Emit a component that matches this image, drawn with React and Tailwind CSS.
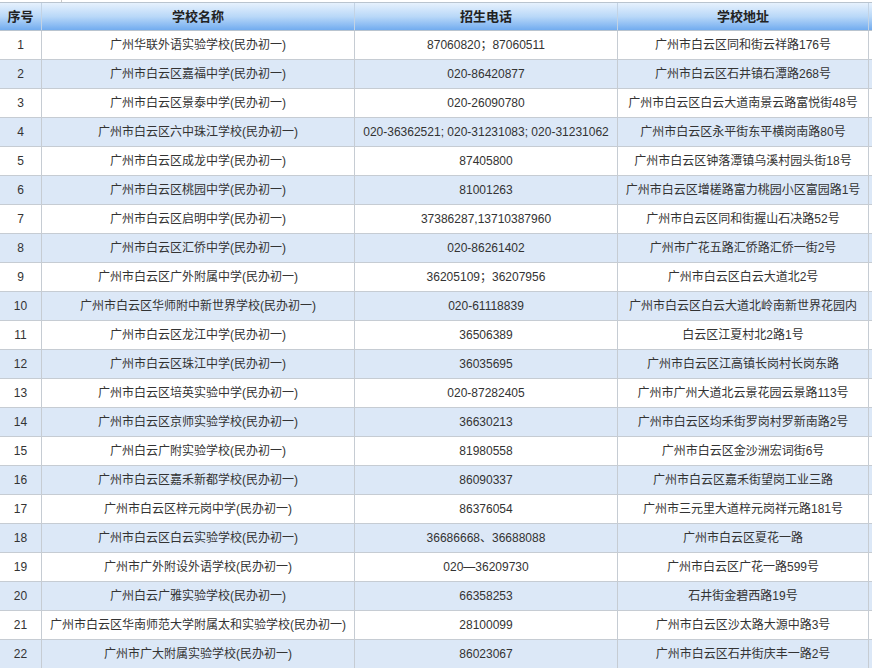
import React from "react";

const rows = [
  ["1", "广州华联外语实验学校(民办初一)", "87060820；87060511", "广州市白云区同和街云祥路176号"],
  ["2", "广州市白云区嘉福中学(民办初一)", "020-86420877", "广州市白云区石井镇石潭路268号"],
  ["3", "广州市白云区景泰中学(民办初一)", "020-26090780", "广州市白云区白云大道南景云路富悦街48号"],
  ["4", "广州市白云区六中珠江学校(民办初一)", "020-36362521; 020-31231083; 020-31231062", "广州市白云区永平街东平横岗南路80号"],
  ["5", "广州市白云区成龙中学(民办初一)", "87405800", "广州市白云区钟落潭镇乌溪村园头街18号"],
  ["6", "广州市白云区桃园中学(民办初一)", "81001263", "广州市白云区增槎路富力桃园小区富园路1号"],
  ["7", "广州市白云区启明中学(民办初一)", "37386287,13710387960", "广州市白云区同和街握山石决路52号"],
  ["8", "广州市白云区汇侨中学(民办初一)", "020-86261402", "广州市广花五路汇侨路汇侨一街2号"],
  ["9", "广州市白云区广外附属中学(民办初一)", "36205109；36207956", "广州市白云区白云大道北2号"],
  ["10", "广州市白云区华师附中新世界学校(民办初一)", "020-61118839", "广州市白云区白云大道北岭南新世界花园内"],
  ["11", "广州市白云区龙江中学(民办初一)", "36506389", "白云区江夏村北2路1号"],
  ["12", "广州市白云区珠江中学(民办初一)", "36035695", "广州市白云区江高镇长岗村长岗东路"],
  ["13", "广州市白云区培英实验中学(民办初一)", "020-87282405", "广州市广州大道北云景花园云景路113号"],
  ["14", "广州市白云区京师实验学校(民办初一)", "36630213", "广州市白云区均禾街罗岗村罗新南路2号"],
  ["15", "广州白云广附实验学校(民办初一)", "81980558", "广州市白云区金沙洲宏词街6号"],
  ["16", "广州市白云区嘉禾新都学校(民办初一)", "86090337", "广州市白云区嘉禾街望岗工业三路"],
  ["17", "广州市白云区梓元岗中学(民办初一)", "86376054", "广州市三元里大道梓元岗祥元路181号"],
  ["18", "广州市白云区白云实验学校(民办初一)", "36686668、36688088", "广州市白云区夏花一路"],
  ["19", "广州市广外附设外语学校(民办初一)", "020—36209730", "广州市白云区广花一路599号"],
  ["20", "广州白云广雅实验学校(民办初一)", "66358253", "石井街金碧西路19号"],
  ["21", "广州市白云区华南师范大学附属太和实验学校(民办初一)", "28100099", "广州市白云区沙太路大源中路3号"],
  ["22", "广州市广大附属实验学校(民办初一)", "86023067", "广州市白云区石井街庆丰一路2号"],
];

const head = ["序号", "学校名称", "招生电话", "学校地址"];
const cols = "grid grid-cols-[41px_313px_263px_252px]";

export default function App() {
  return (
    <div
      className="w-[872px] h-[668px] overflow-hidden bg-white text-[#333]"
      style={{ fontFamily: '"Liberation Sans", "Noto Sans CJK SC", sans-serif' }}
    >
      <div className="h-[2px] w-[62px] border-r border-[#c9c9c9]" />
      <div className={`${cols} h-[29px] bg-gradient-to-b from-[#e6f1fd] via-[#b9d8f8] to-[#72acef] border-t border-b border-[#b9c4cf]`}>
        {head.map((h, i) => (
          <div
            key={h}
            className={`flex items-center justify-center text-[13px] font-bold text-[#222] ${i > 0 ? "border-l border-[#c3d3e4]" : ""} ${i === 3 ? "border-r" : ""}`}
          >
            {h}
          </div>
        ))}
      </div>
      {rows.map((r, ri) => (
        <div
          key={r[0]}
          className={`${cols} h-[29px] border-b border-[#c6ccd3] ${ri % 2 === 1 ? "bg-[#dce8f7]" : "bg-white"}`}
        >
          {r.map((c, i) => (
            <div
              key={i}
              className={`flex items-center justify-center text-[12px] whitespace-nowrap ${i > 0 ? "border-l border-[#c6ccd3]" : ""} ${i === 3 ? "border-r" : ""}`}
            >
              {c}
            </div>
          ))}
        </div>
      ))}
    </div>
  );
}
